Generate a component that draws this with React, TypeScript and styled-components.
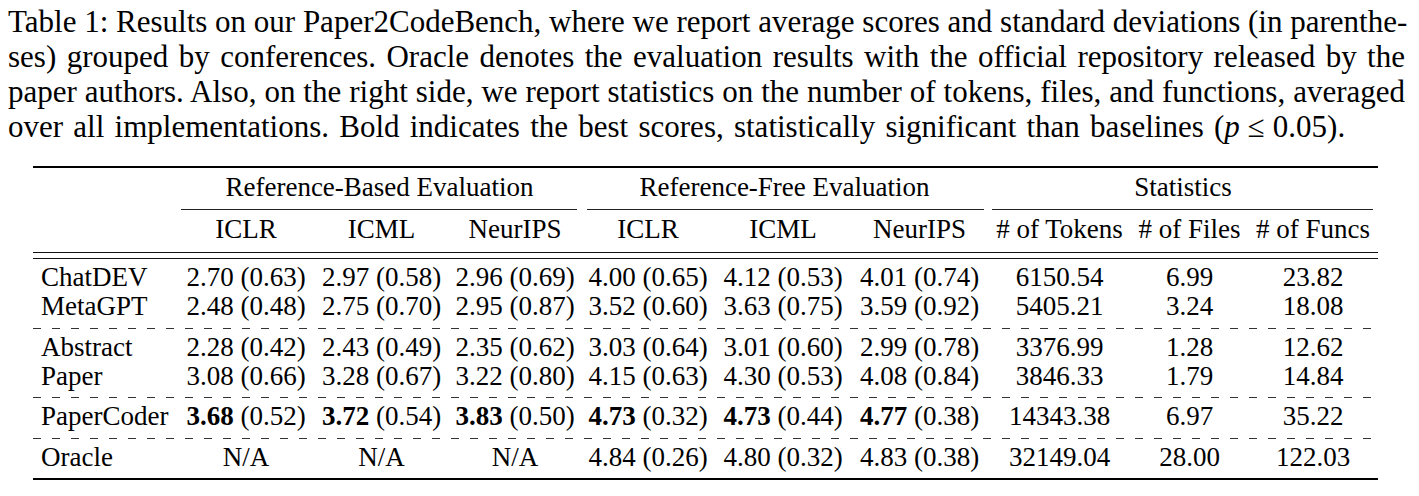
import React from 'react';
import styled, { createGlobalStyle } from 'styled-components';

const SERIF = `"Liberation Serif", Tinos, "Times New Roman", serif`;

const GlobalStyle = createGlobalStyle`
  html, body {
    margin: 0;
    padding: 0;
    background: #fff;
  }
  body {
    font-family: ${SERIF};
    color: #000;
  }
`;

const COLS = '145px 136px 135px 132px 134px 136px 137px 143px 117px 130px';

const Page = styled.div`
  padding: 4px 0 0 8px;
  width: 1397px;
`;

const Caption = styled.div`
  font-size: 31px;
  line-height: 35px;
  width: 1397px;
`;

const CaptionLine = styled.div<{ $last?: boolean }>`
  white-space: nowrap;
  text-align: ${(p) => (p.$last ? 'left' : 'justify')};
  text-align-last: ${(p) => (p.$last ? 'left' : 'justify')};
  word-spacing: ${(p) => (p.$last ? '2.5px' : 'normal')};
`;

const MathVar = styled.i`
  font-style: italic;
`;

const MathOp = styled.span`
  padding: 0 8px;
`;

const Table = styled.div`
  margin: 22px 0 0 25px;
  width: 1345px;
  border-top: 2px solid #000;
  border-bottom: 2px solid #000;
  font-size: 27px;
`;

const Head = styled.div`
  border-bottom: 1px solid #111;
  padding-bottom: 4px;
`;

const Row = styled.div<{ $h: number }>`
  display: grid;
  grid-template-columns: ${COLS};
  line-height: ${(p) => p.$h}px;
`;

const Group = styled.div`
  grid-column: span 3;
`;

const GroupTitle = styled.div`
  text-align: center;
  white-space: nowrap;
`;

const CmidRule = styled.div<{ $l: number; $r: number }>`
  margin: 3px ${(p) => p.$r}px 0 ${(p) => p.$l}px;
  border-top: 1px solid #222;
`;

const Body = styled.div`
  margin-top: 5px;
  border-top: 1px solid #111;
`;

const Section = styled.div`
  padding: 4px 0 6.5px;
`;

const Dash = styled.div`
  height: 1px;
  background-image: repeating-linear-gradient(
    to right,
    #333 0 8px,
    transparent 8px 19px
  );
`;

const Label = styled.div`
  padding-left: 8px;
  white-space: nowrap;
`;

const Cell = styled.div`
  text-align: center;
  white-space: nowrap;
`;

const Best = styled.b`
  font-weight: bold;
`;

type Score = [string, string, boolean?];

interface Model {
  name: string;
  scores: (Score | null)[];
  stats: string[];
}

const sections: Model[][] = [
  [
    {
      name: 'ChatDEV',
      scores: [['2.70', '0.63'], ['2.97', '0.58'], ['2.96', '0.69'], ['4.00', '0.65'], ['4.12', '0.53'], ['4.01', '0.74']],
      stats: ['6150.54', '6.99', '23.82'],
    },
    {
      name: 'MetaGPT',
      scores: [['2.48', '0.48'], ['2.75', '0.70'], ['2.95', '0.87'], ['3.52', '0.60'], ['3.63', '0.75'], ['3.59', '0.92']],
      stats: ['5405.21', '3.24', '18.08'],
    },
  ],
  [
    {
      name: 'Abstract',
      scores: [['2.28', '0.42'], ['2.43', '0.49'], ['2.35', '0.62'], ['3.03', '0.64'], ['3.01', '0.60'], ['2.99', '0.78']],
      stats: ['3376.99', '1.28', '12.62'],
    },
    {
      name: 'Paper',
      scores: [['3.08', '0.66'], ['3.28', '0.67'], ['3.22', '0.80'], ['4.15', '0.63'], ['4.30', '0.53'], ['4.08', '0.84']],
      stats: ['3846.33', '1.79', '14.84'],
    },
  ],
  [
    {
      name: 'PaperCoder',
      scores: [
        ['3.68', '0.52', true],
        ['3.72', '0.54', true],
        ['3.83', '0.50', true],
        ['4.73', '0.32', true],
        ['4.73', '0.44', true],
        ['4.77', '0.38', true],
      ],
      stats: ['14343.38', '6.97', '35.22'],
    },
  ],
  [
    {
      name: 'Oracle',
      scores: [null, null, null, ['4.84', '0.26'], ['4.80', '0.32'], ['4.83', '0.38']],
      stats: ['32149.04', '28.00', '122.03'],
    },
  ],
];

const groups = [
  { title: 'Reference-Based Evaluation', l: 3, r: 4 },
  { title: 'Reference-Free Evaluation', l: 6, r: 4 },
  { title: 'Statistics', l: 4, r: 5 },
];

const columns = ['ICLR', 'ICML', 'NeurIPS', 'ICLR', 'ICML', 'NeurIPS', '# of Tokens', '# of Files', '# of Funcs'];

const ScoreCell = ({ s }: { s: Score | null }) => {
  if (!s) return <Cell>N/A</Cell>;
  const [mean, sd, best] = s;
  return (
    <Cell>
      {best ? <Best>{mean}</Best> : mean} ({sd})
    </Cell>
  );
};

export default function App() {
  return (
    <>
      <GlobalStyle />
      <Page>
        <Caption>
          <CaptionLine>
            Table 1: Results on our Paper2CodeBench, where we report average scores and standard deviations (in parenthe-
          </CaptionLine>
          <CaptionLine>
            ses) grouped by conferences. Oracle denotes the evaluation results with the official repository released by the
          </CaptionLine>
          <CaptionLine>
            paper authors. Also, on the right side, we report statistics on the number of tokens, files, and functions, averaged
          </CaptionLine>
          <CaptionLine $last>
            over all implementations. Bold indicates the best scores, statistically significant than baselines (
            <MathVar>p</MathVar>
            <MathOp>≤</MathOp>0.05).
          </CaptionLine>
        </Caption>

        <Table>
          <Head>
            <Row $h={38}>
              <div />
              {groups.map((g) => (
                <Group key={g.title}>
                  <GroupTitle>{g.title}</GroupTitle>
                  <CmidRule $l={g.l} $r={g.r} />
                </Group>
              ))}
            </Row>
            <Row $h={38}>
              <div />
              {columns.map((c, i) => (
                <Cell key={i}>{c}</Cell>
              ))}
            </Row>
          </Head>
          <Body>
            {sections.map((sec, si) => (
              <React.Fragment key={si}>
                {si > 0 && <Dash />}
                <Section>
                  {sec.map((m) => (
                    <Row $h={29} key={m.name}>
                      <Label>{m.name}</Label>
                      {m.scores.map((s, i) => (
                        <ScoreCell key={i} s={s} />
                      ))}
                      {m.stats.map((v, i) => (
                        <Cell key={i}>{v}</Cell>
                      ))}
                    </Row>
                  ))}
                </Section>
              </React.Fragment>
            ))}
          </Body>
        </Table>
      </Page>
    </>
  );
}
